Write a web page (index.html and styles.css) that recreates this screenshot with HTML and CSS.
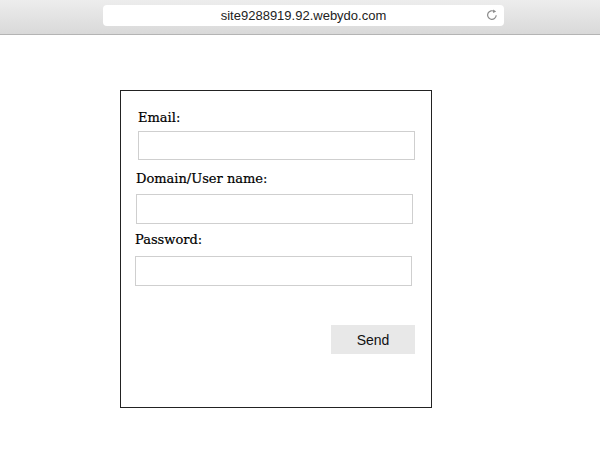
FILE: index.html
```html
<!DOCTYPE html>
<html lang="en">
<head>
  <meta charset="UTF-8" />
  <title>site9288919.92.webydo.com</title>
  <link rel="stylesheet" href="styles.css">
</head>
<body>

  <!-- Browser toolbar -->
  <div class="toolbar">
    <div class="address">
      <span class="url">site9288919.92.webydo.com</span>
      <svg class="reload" width="14" height="14" viewBox="0 0 14 14" aria-hidden="true">
        <path d="M11.2 7.2a4.3 4.3 0 1 1-1.6-3.5" fill="none" stroke="#8c8c8c" stroke-width="1.2"/>
        <path d="M8.2 1.4 L11.2 3.4 L8.0 4.9 Z" fill="#8c8c8c"/>
      </svg>
    </div>
  </div>

  <main class="page">
    <form class="contact-box" onsubmit="return false;">
      <div class="field field-email">
        <label for="email">Email:</label>
        <input type="text" id="email">
      </div>
      <div class="field field-domain">
        <label for="domain">Domain/User name:</label>
        <input type="text" id="domain">
      </div>
      <div class="field field-password">
        <label for="password">Password:</label>
        <input type="password" id="password">
      </div>
      <div class="actions">
        <button type="submit">Send</button>
      </div>
    </form>
  </main>

</body>
</html>
```

FILE: styles.css
```css
/* Reset and base */
* { margin: 0; padding: 0; box-sizing: border-box; }
body {
  background: #fff;
  font-family: "Liberation Sans", Arial, sans-serif;
  color: #000;
}

/* Browser toolbar */
.toolbar {
  height: 35px;
  padding-top: 5px;
  background: linear-gradient(#ededed, #d9d9d9);
  border-bottom: 1px solid #b4b4b4;
}
.address {
  position: relative;
  width: 401px;
  height: 21px;
  margin-left: 103px;
  background: #fff;
  border-radius: 4px;
  display: flex;
  align-items: center;
  justify-content: center;
}
.url {
  font-size: 13px;
  color: #222;
}
.reload {
  position: absolute;
  right: 5px;
  top: 3px;
}

/* Form box */
.page {
  padding: 55px 0 0 120px;
}
.contact-box {
  width: 312px;
  height: 318px;
  border: 1px solid #222;
  padding: 19px 16px 0 14px;
  font-family: "DejaVu Serif", "Liberation Serif", serif;
}
.field label {
  display: block;
  font-size: 13px;
  line-height: 16px;
  color: #000;
  -webkit-text-stroke: 0.2px #000;
}
.field input {
  display: block;
  width: 277px;
  height: 30px;
  border: 1px solid #cfcfcf;
  outline: none;
  background: #fff;
}
.field-email label { margin-left: 3px; }
.field-email input { margin: 5px 0 0 3px; height: 29px; }
.field-domain { margin-top: 11px; }
.field-domain label { margin-left: 1px; }
.field-domain input { margin: 7px 0 0 1px; }
.field-password { margin-top: 8px; }
.field-password input { margin-top: 8px; }

.actions {
  display: flex;
  justify-content: flex-end;
  margin-top: 39px;
}
button {
  width: 84px;
  height: 29px;
  background: #e8e8e8;
  border: none;
  font-family: "Liberation Sans", Arial, sans-serif;
  font-size: 14px;
  color: #111;
  cursor: pointer;
}
```
